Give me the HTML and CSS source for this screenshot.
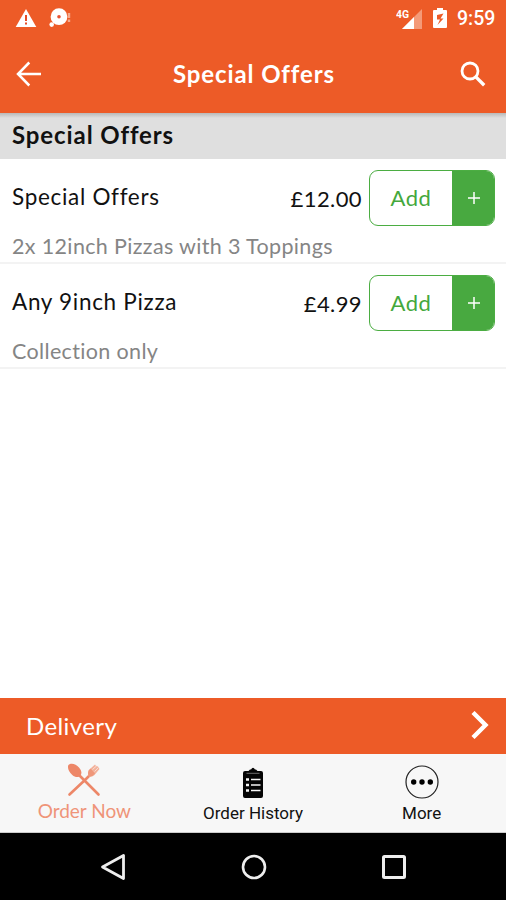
FILE: index.html
```html
<!DOCTYPE html>
<html lang="en">
<head>
<meta charset="utf-8">
<title>Special Offers</title>
<link rel="stylesheet" href="styles.css">
</head>
<body>
<div class="screen">
  <div class="status">
    <div class="status-left">
      <svg width="22" height="20" viewBox="0 0 22 20"><path d="M11 1L21.3 19H.7z" fill="#fff"/><path d="M11 7v6M11 14.5v2" stroke="#e64b25" stroke-width="2"/></svg>
      <svg width="24" height="20" viewBox="0 0 24 20"><circle cx="10" cy="8.700" r="8.400" fill="#fff"/><circle cx="2.700" cy="16.600" r="2.300" fill="#fff"/><circle cx="10" cy="8.700" r="1.800" fill="#e85432"/><path d="M20 5v5M20 11.500v2.500" stroke="#f6aa8d" stroke-width="2.400"/></svg>
    </div>
    <div class="status-right">
      <svg class="signal" width="27" height="22" viewBox="0 0 27 22"><path d="M26 1v20H6z" fill="#f49a78"/><path d="M18 9v12H6z" fill="#fff"/><text class="net" x="0" y="10" textLength="13" lengthAdjust="spacingAndGlyphs">4G</text></svg>
      <svg class="battery" width="14" height="22" viewBox="0 0 14 22"><path d="M4 0h6v2h3q1 0 1 1v16q0 1-1 1H1q-1 0-1-1V3q0-1 1-1h3z" fill="#fff"/><path d="M10.500 5.500L4 7v4.500h3L4.500 17l6-6.500H7.500z" fill="#ed5b27"/></svg>
      <span class="clock">9:59</span>
    </div>
  </div>
  <header class="bar">
    <svg width="26" height="26" viewBox="0 0 26 26" fill="none" stroke="#fff" stroke-width="2.5"><path d="M13.3 1.5L2 13l11.3 11.5M2 13h23"/></svg>
    <h1 class="bar-title">Special Offers</h1>
    <svg width="26" height="26" viewBox="0 0 26 26" fill="none" stroke="#fff"><circle cx="10" cy="10" r="8" stroke-width="2.8"/><path d="M15.6 15.6l8.6 8.6" stroke-width="3.4"/></svg>
  </header>
  <main class="content">
    <h2 class="section">Special Offers</h2>
    <article class="item">
      <div class="item-top">
        <span class="name">Special Offers</span><span class="price">£12.00</span>
        <div class="add"><span class="add-text">Add</span><span class="plus"><svg width="12" height="12" viewBox="0 0 12 12"><path d="M6 0v12M0 6h12" stroke="#fff" stroke-width="1.5"/></svg></span></div>
      </div>
      <p class="desc">2x 12inch Pizzas with 3 Toppings</p>
    </article>
    <article class="item">
      <div class="item-top">
        <span class="name">Any 9inch Pizza</span><span class="price">£4.99</span>
        <div class="add"><span class="add-text">Add</span><span class="plus"><svg width="12" height="12" viewBox="0 0 12 12"><path d="M6 0v12M0 6h12" stroke="#fff" stroke-width="1.5"/></svg></span></div>
      </div>
      <p class="desc">Collection only</p>
    </article>
  </main>
  <div class="delivery">
    <span>Delivery</span>
    <svg width="18" height="28" viewBox="0 0 18 28"><path d="M2 1.5L14.5 14 2 26.5" fill="none" stroke="#fff" stroke-width="4.4"/></svg>
  </div>
  <nav class="tabs">
    <div class="tab active">
      <svg width="34" height="34" viewBox="0 0 34 34"><path d="M12 12L31.500 31.500M18.500 16.500L2.500 31.500M17 18l6-6" stroke="#ed8768" stroke-width="2.600" stroke-linecap="round"/><path d="M1.400 2C4-.4 9 .8 12 4.500c3 3.500 3 6.500 1.300 8.300-2 2-5.300 1.600-8-.8C1.600 9 .2 4.500 1.400 2z" fill="#ed8768"/><path d="M21 10q0-3 2.500-4.500L28 1.500l1 1.500 2 .5 1.500 2.500-5 6q-2.500 2.500-5.500 1.500-1-1.500-1-3.500z" fill="#f3b29b"/><path d="M21 10q0-3 2.500-4.500l4.500 5q-2.500 3.500-6 3-1-1.500-1-3.500z" fill="#ef977a"/><path d="M25.500 6.500L29.500 3M27.500 8.500l4-4" stroke="#f9ddd3" stroke-width="1"/></svg>
      <span>Order Now</span>
    </div>
    <div class="tab history">
      <svg width="22" height="32" viewBox="0 0 22 32"><path d="M3 4h3.500L8 2.500h1Q11-.8 13 2.500h1L15.500 4H19q2 0 2 2v23q0 2-2 2H3q-2 0-2-2V6q0-2 2-2z" fill="#050505"/><path d="M4.500 6.300h13" stroke="#999" stroke-width=".7"/><path d="M4 12.500h3M4 18h3M4 23.500h3" stroke="#f7f7f7" stroke-width="2.600"/><path d="M9 12.500h9.500M9 18h9.500M9 23.500h9.500" stroke="#f7f7f7" stroke-width="1.400"/></svg>
      <span>Order History</span>
    </div>
    <div class="tab more">
      <svg width="34" height="34" viewBox="0 0 34 34"><circle cx="17" cy="17" r="16" fill="none" stroke="#222" stroke-width="1.200"/><circle cx="8.700" cy="17" r="2.700"/><circle cx="17" cy="17" r="2.700"/><circle cx="25.300" cy="17" r="2.700"/></svg>
      <span>More</span>
    </div>
  </nav>
  <div class="system">
    <svg width="26" height="28" viewBox="0 0 26 28"><path d="M23.500 2.500v23L2.500 14z" fill="none" stroke="#eee" stroke-width="2.800" stroke-linejoin="round"/></svg>
    <svg width="26" height="26" viewBox="0 0 26 26"><circle cx="13" cy="13" r="11" fill="none" stroke="#eee" stroke-width="2.600"/></svg>
    <svg width="26" height="26" viewBox="0 0 26 26"><rect x="2.500" y="2.500" width="21" height="21" rx="1" fill="none" stroke="#eee" stroke-width="3"/></svg>
  </div>
</div>
</body>
</html>
```
FILE: styles.css
```css
* { box-sizing: border-box; }
body { margin: 0; font-family: Lato, sans-serif; background: #fff; color: #111; }
h1, h2, p { margin: 0; }
svg { display: block; flex: none; }
span { white-space: nowrap; }
.screen { width: 506px; height: 900px; display: flex; flex-direction: column; }
.status { height: 37px; background: #ed5b27; display: flex; justify-content: space-between; padding: 8px 11px 0 15px; }
.status-left { display: flex; gap: 12px; }
.status-right { display: flex; }
.battery { margin-left: 10px; }
.net { font: bold 10px Roboto, sans-serif; fill: #fff; }
.clock { font: 500 19.5px/22px Roboto, sans-serif; color: #fff; margin-left: 10px; width: 38px; }
.bar { height: 76px; background: #ed5b27; display: flex; align-items: center; justify-content: space-between; padding: 0 20px 2px 16px; }
.bar-title { font-size: 24px; line-height: 28px; font-weight: 700; color: #fff; letter-spacing: .9px; padding-left: 6px; }
.content { flex: 1; }
.section { height: 46px; padding-left: 12px; font-size: 24px; line-height: 43px; letter-spacing: .9px; background: linear-gradient(#b9b9b9, #dfdfdf 5px, #dfdfdf); }
.item { height: 105px; border-bottom: 2px solid #f3f3f3; padding: 11px 11px 0 12px; }
.item-top { display: flex; height: 56px; }
.name { flex: 1; font-size: 22.5px; line-height: 53px; letter-spacing: .7px; }
.price { font-size: 22px; line-height: 57px; margin-right: 7px; letter-spacing: .4px; }
.add { width: 126px; height: 56px; border: 1.5px solid #4bad42; border-radius: 9px; display: flex; overflow: hidden; }
.add-text { flex: 1; text-align: center; font-size: 22px; line-height: 54px; letter-spacing: .5px; color: #44a83c; }
.plus { width: 42px; background: #48a940; display: flex; align-items: center; justify-content: center; padding-left: 2px; }
.desc { font-size: 21.5px; line-height: 26px; margin-top: 7px; color: #858585; letter-spacing: .35px; white-space: nowrap; }
.delivery { height: 56px; background: #ed5b27; color: #fff; display: flex; align-items: center; justify-content: space-between; padding: 0 17px 2px 26px; font-size: 24px; letter-spacing: .4px; }
.tabs { height: 79px; background: #f7f7f7; display: grid; grid-template-columns: 1fr 1fr 1fr; border-bottom: 1px solid #ccc; }
.tab { display: flex; flex-direction: column; align-items: center; padding-top: 9px; font: 17px/20px Roboto, sans-serif; color: #111; }
.tab span { margin-top: 4px; }
.active { color: #ef9479; font-family: Lato, sans-serif; font-size: 19px; }
.history { padding-top: 13px; }
.more { padding-top: 11px; }
.system { height: 67px; background: #000; display: flex; align-items: center; justify-content: space-between; padding: 0 99px 0 100px; }
```
